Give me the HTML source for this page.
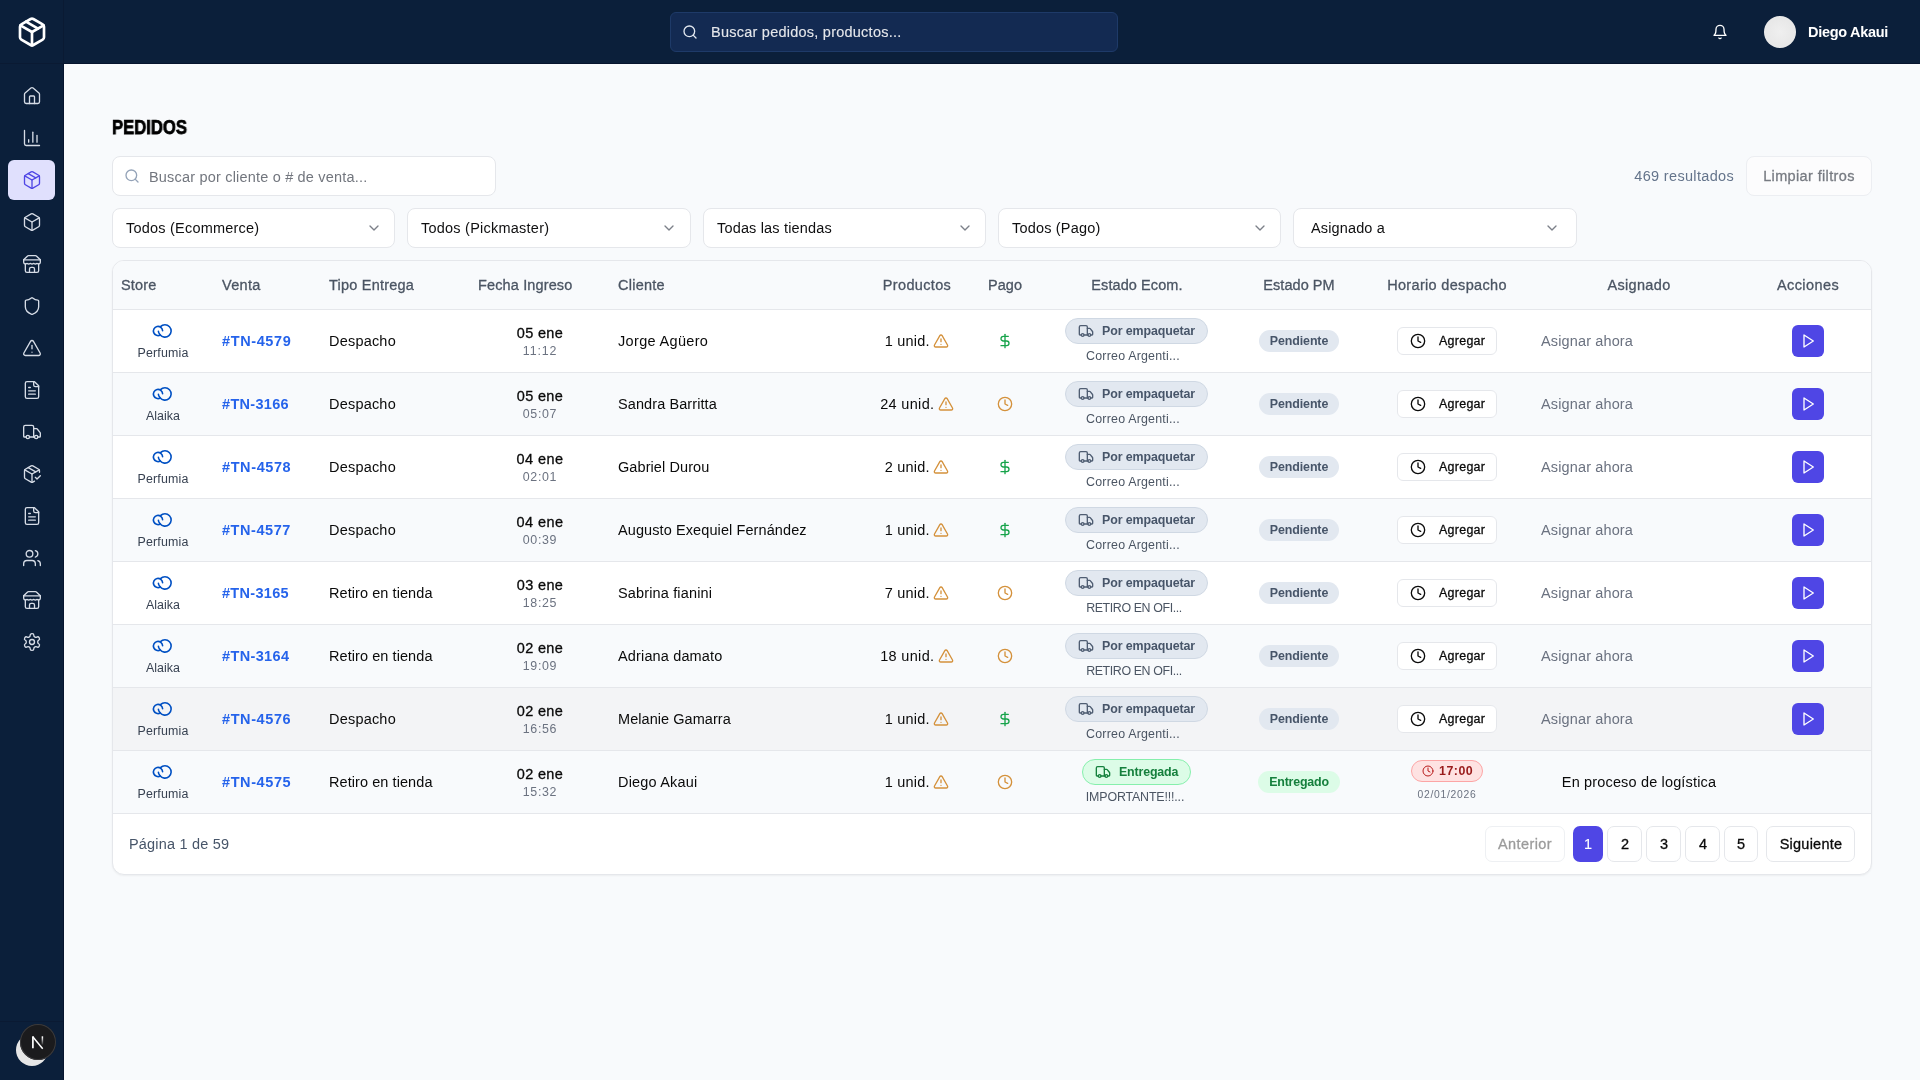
<!DOCTYPE html>
<html lang="es"><head><meta charset="utf-8"><title>Pedidos</title><style>
html,body{margin:0;padding:0}
body{width:1920px;height:1080px;position:relative;overflow:hidden;background:#f8fafc;font-family:"Liberation Sans", sans-serif;}
body div,body svg{position:absolute;box-sizing:border-box}
.tx{white-space:nowrap;line-height:1;will-change:transform}
.t{display:inline-block}
.fx{will-change:transform;display:flex;justify-content:center;align-items:center;white-space:nowrap}
.fx>*{position:static!important;flex:none}
</style></head><body>
<div style="left:0px;top:0px;width:1920px;height:64px;background:#0b1f3a;border-bottom:1px solid #06152e"></div>
<div style="left:0px;top:0px;width:64px;height:1080px;background:#0b1f3a;border-right:1px solid #06152e"></div>
<div style="left:0px;top:63px;width:63px;height:1px;background:#0a1a33"></div>
<div style="left:63px;top:0px;width:1px;height:63px;background:#0a1a33"></div>
<svg style="left:16.0px;top:16.0px;" width="32" height="32" viewBox="0 0 24 24" fill="none" stroke="#ffffff" stroke-width="2" stroke-linecap="round" stroke-linejoin="round"><path d="M11 21.73a2 2 0 0 0 2 0l7-4A2 2 0 0 0 21 16V8a2 2 0 0 0-1-1.73l-7-4a2 2 0 0 0-2 0l-7 4A2 2 0 0 0 3 8v8a2 2 0 0 0 1 1.73z"/><path d="M12 22V12"/><path d="M3.29 7 12 12l8.71-5"/><path d="m7.5 4.27 9 5.15"/></svg>
<svg style="left:22.0px;top:86.0px;" width="20" height="20" viewBox="0 0 24 24" fill="none" stroke="#d6dce6" stroke-width="1.6" stroke-linecap="round" stroke-linejoin="round"><path d="M15 21v-8a1 1 0 0 0-1-1h-4a1 1 0 0 0-1 1v8"/><path d="M3 10a2 2 0 0 1 .709-1.528l7-5.999a2 2 0 0 1 2.582 0l7 5.999A2 2 0 0 1 21 10v9a2 2 0 0 1-2 2H5a2 2 0 0 1-2-2z"/></svg>
<svg style="left:22.0px;top:128.0px;" width="20" height="20" viewBox="0 0 24 24" fill="none" stroke="#d6dce6" stroke-width="1.6" stroke-linecap="round" stroke-linejoin="round"><path d="M3 3v16a2 2 0 0 0 2 2h16"/><path d="M18 17V9"/><path d="M13 17V5"/><path d="M8 17v-3"/></svg>
<div style="left:8px;top:160px;width:47px;height:40px;background:#e0e0fd;border-radius:6px"></div>
<svg style="left:22.0px;top:170.0px;" width="20" height="20" viewBox="0 0 24 24" fill="none" stroke="#4f46e5" stroke-width="1.6" stroke-linecap="round" stroke-linejoin="round"><path d="M11 21.73a2 2 0 0 0 2 0l7-4A2 2 0 0 0 21 16V8a2 2 0 0 0-1-1.73l-7-4a2 2 0 0 0-2 0l-7 4A2 2 0 0 0 3 8v8a2 2 0 0 0 1 1.73z"/><path d="M12 22V12"/><path d="M3.29 7 12 12l8.71-5"/><path d="m7.5 4.27 9 5.15"/></svg>
<svg style="left:22.0px;top:212.0px;" width="20" height="20" viewBox="0 0 24 24" fill="none" stroke="#d6dce6" stroke-width="1.6" stroke-linecap="round" stroke-linejoin="round"><path d="M21 8a2 2 0 0 0-1-1.73l-7-4a2 2 0 0 0-2 0l-7 4A2 2 0 0 0 3 8v8a2 2 0 0 0 1 1.73l7 4a2 2 0 0 0 2 0l7-4A2 2 0 0 0 21 16Z"/><path d="m3.3 7 8.7 5 8.7-5"/><path d="M12 22V12"/></svg>
<svg style="left:22.0px;top:254.0px;" width="20" height="20" viewBox="0 0 24 24" fill="none" stroke="#d6dce6" stroke-width="1.6" stroke-linecap="round" stroke-linejoin="round"><path d="m2 7 4.41-4.41A2 2 0 0 1 7.83 2h8.34a2 2 0 0 1 1.42.59L22 7"/><path d="M4 12v8a2 2 0 0 0 2 2h12a2 2 0 0 0 2-2v-8"/><path d="M15 22v-4a2 2 0 0 0-2-2h-2a2 2 0 0 0-2 2v4"/><path d="M2 7h20"/><path d="M22 7v3a2 2 0 0 1-2 2a2.7 2.7 0 0 1-1.59-.63.7.7 0 0 0-.82 0A2.7 2.7 0 0 1 16 12a2.7 2.7 0 0 1-1.59-.63.7.7 0 0 0-.82 0A2.7 2.7 0 0 1 12 12a2.7 2.7 0 0 1-1.59-.63.7.7 0 0 0-.82 0A2.7 2.7 0 0 1 8 12a2.7 2.7 0 0 1-1.59-.63.7.7 0 0 0-.82 0A2.7 2.7 0 0 1 4 12a2 2 0 0 1-2-2V7"/></svg>
<svg style="left:22.0px;top:296.0px;" width="20" height="20" viewBox="0 0 24 24" fill="none" stroke="#d6dce6" stroke-width="1.6" stroke-linecap="round" stroke-linejoin="round"><path d="M20 13c0 5-3.5 7.5-7.66 8.95a1 1 0 0 1-.67-.01C7.5 20.5 4 18 4 13V6a1 1 0 0 1 1-1c2 0 4.5-1.2 6.24-2.72a1.17 1.17 0 0 1 1.52 0C14.51 3.81 17 5 19 5a1 1 0 0 1 1 1z"/></svg>
<svg style="left:22.0px;top:338.0px;" width="20" height="20" viewBox="0 0 24 24" fill="none" stroke="#d6dce6" stroke-width="1.6" stroke-linecap="round" stroke-linejoin="round"><path d="m21.73 18-8-14a2 2 0 0 0-3.48 0l-8 14A2 2 0 0 0 4 21h16a2 2 0 0 0 1.73-3"/><path d="M12 9v4"/><path d="M12 17h.01"/></svg>
<svg style="left:22.0px;top:380.0px;" width="20" height="20" viewBox="0 0 24 24" fill="none" stroke="#d6dce6" stroke-width="1.6" stroke-linecap="round" stroke-linejoin="round"><path d="M15 2H6a2 2 0 0 0-2 2v16a2 2 0 0 0 2 2h12a2 2 0 0 0 2-2V7Z"/><path d="M14 2v4a2 2 0 0 0 2 2h4"/><path d="M10 9H8"/><path d="M16 13H8"/><path d="M16 17H8"/></svg>
<svg style="left:22.0px;top:422.0px;" width="20" height="20" viewBox="0 0 24 24" fill="none" stroke="#d6dce6" stroke-width="1.6" stroke-linecap="round" stroke-linejoin="round"><path d="M14 18V6a2 2 0 0 0-2-2H4a2 2 0 0 0-2 2v11a1 1 0 0 0 1 1h2"/><path d="M15 18H9"/><path d="M19 18h2a1 1 0 0 0 1-1v-3.65a1 1 0 0 0-.22-.624l-3.48-4.35A1 1 0 0 0 17.52 8H14"/><circle cx="17" cy="18" r="2"/><circle cx="7" cy="18" r="2"/></svg>
<svg style="left:22.0px;top:464.0px;" width="20" height="20" viewBox="0 0 24 24" fill="none" stroke="#d6dce6" stroke-width="1.6" stroke-linecap="round" stroke-linejoin="round"><path d="m16 16 2 2 4-4"/><path d="M21 10V8a2 2 0 0 0-1-1.73l-7-4a2 2 0 0 0-2 0l-7 4A2 2 0 0 0 3 8v8a2 2 0 0 0 1 1.73l7 4a2 2 0 0 0 2 0l2-1.14"/><path d="m7.5 4.27 9 5.15"/><path d="M3.29 7 12 12l8.71-5"/><path d="M12 22V12"/></svg>
<svg style="left:22.0px;top:506.0px;" width="20" height="20" viewBox="0 0 24 24" fill="none" stroke="#d6dce6" stroke-width="1.6" stroke-linecap="round" stroke-linejoin="round"><path d="M15 2H6a2 2 0 0 0-2 2v16a2 2 0 0 0 2 2h12a2 2 0 0 0 2-2V7Z"/><path d="M14 2v4a2 2 0 0 0 2 2h4"/><path d="M10 9H8"/><path d="M16 13H8"/><path d="M16 17H8"/></svg>
<svg style="left:22.0px;top:548.0px;" width="20" height="20" viewBox="0 0 24 24" fill="none" stroke="#d6dce6" stroke-width="1.6" stroke-linecap="round" stroke-linejoin="round"><path d="M16 21v-2a4 4 0 0 0-4-4H6a4 4 0 0 0-4 4v2"/><circle cx="9" cy="7" r="4"/><path d="M22 21v-2a4 4 0 0 0-3-3.87"/><path d="M16 3.13a4 4 0 0 1 0 7.75"/></svg>
<svg style="left:22.0px;top:590.0px;" width="20" height="20" viewBox="0 0 24 24" fill="none" stroke="#d6dce6" stroke-width="1.6" stroke-linecap="round" stroke-linejoin="round"><path d="m2 7 4.41-4.41A2 2 0 0 1 7.83 2h8.34a2 2 0 0 1 1.42.59L22 7"/><path d="M4 12v8a2 2 0 0 0 2 2h12a2 2 0 0 0 2-2v-8"/><path d="M15 22v-4a2 2 0 0 0-2-2h-2a2 2 0 0 0-2 2v4"/><path d="M2 7h20"/><path d="M22 7v3a2 2 0 0 1-2 2a2.7 2.7 0 0 1-1.59-.63.7.7 0 0 0-.82 0A2.7 2.7 0 0 1 16 12a2.7 2.7 0 0 1-1.59-.63.7.7 0 0 0-.82 0A2.7 2.7 0 0 1 12 12a2.7 2.7 0 0 1-1.59-.63.7.7 0 0 0-.82 0A2.7 2.7 0 0 1 8 12a2.7 2.7 0 0 1-1.59-.63.7.7 0 0 0-.82 0A2.7 2.7 0 0 1 4 12a2 2 0 0 1-2-2V7"/></svg>
<svg style="left:22.0px;top:632.0px;" width="20" height="20" viewBox="0 0 24 24" fill="none" stroke="#d6dce6" stroke-width="1.6" stroke-linecap="round" stroke-linejoin="round"><path d="M12.22 2h-.44a2 2 0 0 0-2 2v.18a2 2 0 0 1-1 1.73l-.43.25a2 2 0 0 1-2 0l-.15-.08a2 2 0 0 0-2.73.73l-.22.38a2 2 0 0 0 .73 2.73l.15.1a2 2 0 0 1 1 1.72v.51a2 2 0 0 1-1 1.74l-.15.09a2 2 0 0 0-.73 2.73l.22.38a2 2 0 0 0 2.73.73l.15-.08a2 2 0 0 1 2 0l.43.25a2 2 0 0 1 1 1.73V20a2 2 0 0 0 2 2h.44a2 2 0 0 0 2-2v-.18a2 2 0 0 1 1-1.73l.43-.25a2 2 0 0 1 2 0l.15.08a2 2 0 0 0 2.73-.73l.22-.39a2 2 0 0 0-.73-2.73l-.15-.08a2 2 0 0 1-1-1.74v-.5a2 2 0 0 1 1-1.74l.15-.09a2 2 0 0 0 .73-2.73l-.22-.38a2 2 0 0 0-2.73-.73l-.15.08a2 2 0 0 1-2 0l-.43-.25a2 2 0 0 1-1-1.73V4a2 2 0 0 0-2-2z"/><circle cx="12" cy="12" r="3"/></svg>
<div style="left:0px;top:1021px;width:63px;height:1px;background:#0a1a33"></div>
<div style="left:16px;top:1034px;width:32px;height:32px;background:#e6e6e6;border-radius:50%"></div>
<div style="left:20px;top:1024px;width:36px;height:36px;background:#1b1b1d;border-radius:50%;box-shadow:inset 0 0 0 1px #3b3b3d"></div>
<svg style="left:31px;top:1035px" width="14" height="16" viewBox="0 0 14 16" fill="none" stroke="#fff" stroke-width="1.7"><defs><linearGradient id="ng" gradientUnits="userSpaceOnUse" x1="0" y1="2" x2="0" y2="10.5"><stop offset="0" stop-color="#fff"/><stop offset="1" stop-color="#fff" stop-opacity="0"/></linearGradient></defs><path d="M1.9 13.2V1.5"/><path d="M1.6 1.6L11.7 13.7" stroke-width="1.5"/><path d="M11.4 1.3v8.4" stroke="url(#ng)" stroke-width="1.5"/></svg>
<div style="left:670px;top:12px;width:448px;height:40px;background:#132a52;border:1px solid #1e3a68;border-radius:6px"></div>
<svg style="left:682.0px;top:24.0px;" width="16" height="16" viewBox="0 0 24 24" fill="none" stroke="#e2e8f0" stroke-width="2" stroke-linecap="round" stroke-linejoin="round"><circle cx="11" cy="11" r="8"/><path d="m21 21-4.3-4.3"/></svg>
<div class="tx" style="left:711px;top:24.63px;font-size:14.49px;font-weight:400;color:#e5e7eb;-webkit-text-stroke:0.12px #e5e7eb;letter-spacing:0.247px;"><span class="t">Buscar pedidos, productos...</span></div>
<svg style="left:1712.0px;top:24.0px;" width="16" height="16" viewBox="0 0 24 24" fill="none" stroke="#ffffff" stroke-width="2" stroke-linecap="round" stroke-linejoin="round"><path d="M6 8a6 6 0 0 1 12 0c0 7 3 9 3 9H3s3-2 3-9"/><path d="M10.3 21a1.94 1.94 0 0 0 3.4 0"/></svg>
<div style="left:1764px;top:16px;width:32px;height:32px;background:radial-gradient(circle,#efefef 0,#e8e8e8 60%);border-radius:50%"></div>
<div class="tx" style="left:1808px;top:24.63px;font-size:14.49px;font-weight:700;color:#ffffff;letter-spacing:-0.281px;"><span class="t">Diego Akaui</span></div>
<div class="tx" style="left:111.6px;top:117.74px;font-size:19.5px;font-weight:700;color:#000;-webkit-text-stroke:0.75px #000;transform:scaleX(.855);transform-origin:0 0">PEDIDOS</div>
<div style="left:112px;top:156px;width:384px;height:40px;background:#fff;border:1px solid #e5e7eb;border-radius:8px"></div>
<svg style="left:124.0px;top:168.2px;" width="16" height="16" viewBox="0 0 24 24" fill="none" stroke="#94a3b8" stroke-width="2" stroke-linecap="round" stroke-linejoin="round"><circle cx="11" cy="11" r="8"/><path d="m21 21-4.3-4.3"/></svg>
<div class="tx" style="left:149px;top:169.73px;font-size:14.49px;font-weight:400;color:#72767e;letter-spacing:0.196px;"><span class="t">Buscar por cliente o # de venta...</span></div>
<div class="tx" style="left:1134px;width:600px;text-align:right;top:169.23px;font-size:14.49px;font-weight:400;color:#64748b;letter-spacing:0.333px;"><span class="t">469 resultados</span></div>
<div style="left:1746px;top:156px;width:126px;height:40px;background:#fcfcfd;border:1px solid #eceef2;border-radius:8px"></div>
<div class="tx" style="left:1509px;width:600px;text-align:center;top:169.23px;font-size:14.49px;font-weight:400;color:#777b82;-webkit-text-stroke:0.3px #777b82;letter-spacing:0.371px;"><span class="t">Limpiar filtros</span></div>
<div style="left:112px;top:208px;width:283px;height:40px;background:#fff;border:1px solid #e5e7eb;border-radius:8px"></div>
<div class="tx" style="left:126px;top:220.73px;font-size:14.49px;font-weight:400;color:#0f0f10;letter-spacing:0.223px;"><span class="t">Todos (Ecommerce)</span></div>
<svg style="left:366.0px;top:220.0px;" width="16" height="16" viewBox="0 0 24 24" fill="none" stroke="#7c8089" stroke-width="2" stroke-linecap="round" stroke-linejoin="round"><path d="m6 9 6 6 6-6"/></svg>
<div style="left:407px;top:208px;width:284px;height:40px;background:#fff;border:1px solid #e5e7eb;border-radius:8px"></div>
<div class="tx" style="left:421px;top:220.73px;font-size:14.49px;font-weight:400;color:#0f0f10;letter-spacing:0.239px;"><span class="t">Todos (Pickmaster)</span></div>
<svg style="left:661.0px;top:220.0px;" width="16" height="16" viewBox="0 0 24 24" fill="none" stroke="#7c8089" stroke-width="2" stroke-linecap="round" stroke-linejoin="round"><path d="m6 9 6 6 6-6"/></svg>
<div style="left:703px;top:208px;width:283px;height:40px;background:#fff;border:1px solid #e5e7eb;border-radius:8px"></div>
<div class="tx" style="left:717px;top:220.73px;font-size:14.49px;font-weight:400;color:#0f0f10;letter-spacing:0.176px;"><span class="t">Todas las tiendas</span></div>
<svg style="left:957.0px;top:220.0px;" width="16" height="16" viewBox="0 0 24 24" fill="none" stroke="#7c8089" stroke-width="2" stroke-linecap="round" stroke-linejoin="round"><path d="m6 9 6 6 6-6"/></svg>
<div style="left:998px;top:208px;width:283px;height:40px;background:#fff;border:1px solid #e5e7eb;border-radius:8px"></div>
<div class="tx" style="left:1012px;top:220.73px;font-size:14.49px;font-weight:400;color:#0f0f10;letter-spacing:0.194px;"><span class="t">Todos (Pago)</span></div>
<svg style="left:1252.0px;top:220.0px;" width="16" height="16" viewBox="0 0 24 24" fill="none" stroke="#7c8089" stroke-width="2" stroke-linecap="round" stroke-linejoin="round"><path d="m6 9 6 6 6-6"/></svg>
<div style="left:1293px;top:208px;width:284px;height:40px;background:#fff;border:1px solid #e5e7eb;border-radius:8px"></div>
<div class="tx" style="left:1310.5px;top:220.73px;font-size:14.49px;font-weight:400;color:#0f0f10;letter-spacing:0.145px;"><span class="t">Asignado a</span></div>
<svg style="left:1544.0px;top:220.0px;" width="16" height="16" viewBox="0 0 24 24" fill="none" stroke="#7c8089" stroke-width="2" stroke-linecap="round" stroke-linejoin="round"><path d="m6 9 6 6 6-6"/></svg>
<div style="left:112px;top:260px;width:1760px;height:615px;background:#fff;border:1px solid #e5e7eb;border-radius:12px;overflow:hidden;box-shadow:0 1px 2px rgba(0,0,0,.05)">
<div style="left:-113px;top:-261px;width:1920px;height:1080px">
<div style="left:113px;top:261px;width:1758px;height:48px;background:#f8fafc"></div>
<div style="left:113px;top:309px;width:1758px;height:1px;background:#e5e7eb"></div>
<div style="left:113px;top:310px;width:1758px;height:62px;background:#ffffff"></div>
<div style="left:113px;top:372px;width:1758px;height:1px;background:#e5e7eb"></div>
<div style="left:113px;top:373px;width:1758px;height:62px;background:#f8fafc"></div>
<div style="left:113px;top:435px;width:1758px;height:1px;background:#e5e7eb"></div>
<div style="left:113px;top:436px;width:1758px;height:62px;background:#ffffff"></div>
<div style="left:113px;top:498px;width:1758px;height:1px;background:#e5e7eb"></div>
<div style="left:113px;top:499px;width:1758px;height:62px;background:#f8fafc"></div>
<div style="left:113px;top:561px;width:1758px;height:1px;background:#e5e7eb"></div>
<div style="left:113px;top:562px;width:1758px;height:62px;background:#ffffff"></div>
<div style="left:113px;top:624px;width:1758px;height:1px;background:#e5e7eb"></div>
<div style="left:113px;top:625px;width:1758px;height:62px;background:#f8fafc"></div>
<div style="left:113px;top:687px;width:1758px;height:1px;background:#e5e7eb"></div>
<div style="left:113px;top:688px;width:1758px;height:62px;background:#f3f4f6"></div>
<div style="left:113px;top:750px;width:1758px;height:1px;background:#e5e7eb"></div>
<div style="left:113px;top:751px;width:1758px;height:62px;background:#f8fafc"></div>
<div style="left:113px;top:813px;width:1758px;height:1px;background:#e5e7eb"></div>
<div class="tx" style="left:121px;top:277.93px;font-size:14.49px;font-weight:400;color:#4b5563;-webkit-text-stroke:0.3px #4b5563;letter-spacing:0.175px;"><span class="t">Store</span></div>
<div class="tx" style="left:222px;top:277.93px;font-size:14.49px;font-weight:400;color:#4b5563;-webkit-text-stroke:0.3px #4b5563;letter-spacing:0.309px;"><span class="t">Venta</span></div>
<div class="tx" style="left:329px;top:277.93px;font-size:14.49px;font-weight:400;color:#4b5563;-webkit-text-stroke:0.3px #4b5563;letter-spacing:0.228px;"><span class="t">Tipo Entrega</span></div>
<div class="tx" style="left:477.6px;top:277.93px;font-size:14.49px;font-weight:400;color:#4b5563;-webkit-text-stroke:0.3px #4b5563;letter-spacing:0.142px;"><span class="t">Fecha Ingreso</span></div>
<div class="tx" style="left:617.7px;top:277.93px;font-size:14.49px;font-weight:400;color:#4b5563;-webkit-text-stroke:0.3px #4b5563;letter-spacing:0.248px;"><span class="t">Cliente</span></div>
<div class="tx" style="left:617px;width:600px;text-align:center;top:277.93px;font-size:14.49px;font-weight:400;color:#4b5563;-webkit-text-stroke:0.3px #4b5563;letter-spacing:0.351px;"><span class="t">Productos</span></div>
<div class="tx" style="left:705px;width:600px;text-align:center;top:277.93px;font-size:14.49px;font-weight:400;color:#4b5563;-webkit-text-stroke:0.3px #4b5563;letter-spacing:0.047px;"><span class="t">Pago</span></div>
<div class="tx" style="left:836.5px;width:600px;text-align:center;top:277.93px;font-size:14.49px;font-weight:400;color:#4b5563;-webkit-text-stroke:0.3px #4b5563;letter-spacing:0.092px;"><span class="t">Estado Ecom.</span></div>
<div class="tx" style="left:999.2px;width:600px;text-align:center;top:277.93px;font-size:14.49px;font-weight:400;color:#4b5563;-webkit-text-stroke:0.3px #4b5563;letter-spacing:0.057px;"><span class="t">Estado PM</span></div>
<div class="tx" style="left:1147px;width:600px;text-align:center;top:277.93px;font-size:14.49px;font-weight:400;color:#4b5563;-webkit-text-stroke:0.3px #4b5563;letter-spacing:0.329px;"><span class="t">Horario despacho</span></div>
<div class="tx" style="left:1338.6px;width:600px;text-align:center;top:277.93px;font-size:14.49px;font-weight:400;color:#4b5563;-webkit-text-stroke:0.3px #4b5563;letter-spacing:0.338px;"><span class="t">Asignado</span></div>
<div class="tx" style="left:1508.2px;width:600px;text-align:center;top:277.93px;font-size:14.49px;font-weight:400;color:#4b5563;-webkit-text-stroke:0.3px #4b5563;letter-spacing:0.422px;"><span class="t">Acciones</span></div>
<svg style="left:151.4px;top:322.8px" width="22" height="16" viewBox="0 0 22 16" fill="none" stroke="#0050c3" stroke-width="1.6" stroke-linecap="round"><path d="M9.3 12A4.6 4.6 0 1 1 11.6 7.76"/><path d="M7.4 8.25Q7.5 10.3 9.03 11.7A6.2 6.2 0 1 0 9.5 3.6"/></svg>
<div class="tx" style="left:-137px;width:600px;text-align:center;top:346.69px;font-size:12.42px;font-weight:400;color:#374151;letter-spacing:0.168px;"><span class="t">Perfumia</span></div>
<div class="tx" style="left:222px;top:334.03px;font-size:14.49px;font-weight:700;color:#2563eb;letter-spacing:0.618px;"><span class="t">#TN-4579</span></div>
<div class="tx" style="left:329px;top:334.03px;font-size:14.49px;font-weight:400;color:#0a0a0a;letter-spacing:0.209px;"><span class="t">Despacho</span></div>
<div class="tx" style="left:239.79999999999995px;width:600px;text-align:center;top:325.53px;font-size:14.49px;font-weight:400;color:#0a0a0a;-webkit-text-stroke:0.3px #0a0a0a;letter-spacing:0.331px;"><span class="t">05 ene</span></div>
<div class="tx" style="left:239.79999999999995px;width:600px;text-align:center;top:345.19px;font-size:12.42px;font-weight:400;color:#6b7280;letter-spacing:0.847px;font-variant-numeric:tabular-nums;"><span class="t">11:12</span></div>
<div class="tx" style="left:617.7px;top:334.03px;font-size:14.49px;font-weight:400;color:#0a0a0a;letter-spacing:0.339px;"><span class="t">Jorge Agüero</span></div>
<div class="fx" style="left:716.6px;top:331px;width:400px;height:20px"><span class="t" style="font-size:14.49px;line-height:20px;color:#0a0a0a;font-variant-numeric:tabular-nums;letter-spacing:0.232px;">1 unid.</span><svg width="16" height="16" viewBox="0 0 24 24" fill="none" stroke="#d4913b" stroke-width="2" stroke-linecap="round" stroke-linejoin="round" style="margin-left:3.4px"><path d="m21.73 18-8-14a2 2 0 0 0-3.48 0l-8 14A2 2 0 0 0 4 21h16a2 2 0 0 0 1.73-3"/><path d="M12 9v4"/><path d="M12 17h.01"/></svg></div>
<svg style="left:997.0px;top:333.3px;" width="16" height="16" viewBox="0 0 24 24" fill="none" stroke="#16a34a" stroke-width="2" stroke-linecap="round" stroke-linejoin="round"><path d="M12 2v20"/><path d="M17 5H9.5a3.5 3.5 0 0 0 0 7h5a3.5 3.5 0 0 1 0 7H6"/></svg>
<div style="left:1065px;top:318px;width:143px;height:26px;background:#e2e8f0;border:1px solid #cfd8e3;border-radius:13px"></div>
<svg style="left:1078.0px;top:323.0px;" width="16" height="16" viewBox="0 0 24 24" fill="none" stroke="#4f5d72" stroke-width="2" stroke-linecap="round" stroke-linejoin="round"><path d="M14 18V6a2 2 0 0 0-2-2H4a2 2 0 0 0-2 2v11a1 1 0 0 0 1 1h2"/><path d="M15 18H9"/><path d="M19 18h2a1 1 0 0 0 1-1v-3.65a1 1 0 0 0-.22-.624l-3.48-4.35A1 1 0 0 0 17.52 8H14"/><circle cx="17" cy="18" r="2"/><circle cx="7" cy="18" r="2"/></svg>
<div class="tx" style="left:1102px;top:324.79px;font-size:12.42px;font-weight:700;color:#475569;letter-spacing:-0.102px;"><span class="t">Por empaquetar</span></div>
<div class="tx" style="left:833px;width:600px;text-align:center;top:349.79px;font-size:12.42px;font-weight:400;color:#4b5563;letter-spacing:0.203px;"><span class="t">Correo Argenti...</span></div>
<div style="left:1259px;top:330px;width:80px;height:22px;background:#e2e8f0;border-radius:11px"></div>
<div class="tx" style="left:999.2px;width:600px;text-align:center;top:335.29px;font-size:12.42px;font-weight:700;color:#475569;letter-spacing:-0.102px;"><span class="t">Pendiente</span></div>
<div style="left:1397px;top:327px;width:100px;height:28px;background:#fff;border:1px solid #e5e7eb;border-radius:6px"></div>
<svg style="left:1410.0px;top:333.0px;" width="16" height="16" viewBox="0 0 24 24" fill="none" stroke="#0a0a0a" stroke-width="2" stroke-linecap="round" stroke-linejoin="round"><circle cx="12" cy="12" r="10"/><path d="M12 6v6l4 2"/></svg>
<div class="tx" style="left:1438.5px;top:335.29px;font-size:12.42px;font-weight:400;color:#0a0a0a;-webkit-text-stroke:0.3px #0a0a0a;letter-spacing:0.295px;"><span class="t">Agregar</span></div>
<div class="tx" style="left:1540.5px;top:334.03px;font-size:14.49px;font-weight:400;color:#6b7280;letter-spacing:0.143px;"><span class="t">Asignar ahora</span></div>
<div style="left:1792px;top:325px;width:32px;height:32px;background:#4f46e5;border-radius:6px"></div>
<svg style="left:1800.0px;top:333.0px;" width="16" height="16" viewBox="0 0 24 24" fill="none" stroke="#ffffff" stroke-width="2" stroke-linecap="round" stroke-linejoin="round"><path d="M6 3l14 9-14 9z"/></svg>
<svg style="left:151.4px;top:385.8px" width="22" height="16" viewBox="0 0 22 16" fill="none" stroke="#0050c3" stroke-width="1.6" stroke-linecap="round"><path d="M9.3 12A4.6 4.6 0 1 1 11.6 7.76"/><path d="M7.4 8.25Q7.5 10.3 9.03 11.7A6.2 6.2 0 1 0 9.5 3.6"/></svg>
<div class="tx" style="left:-137px;width:600px;text-align:center;top:409.69px;font-size:12.42px;font-weight:400;color:#374151;letter-spacing:0.06px;"><span class="t">Alaika</span></div>
<div class="tx" style="left:222px;top:397.03px;font-size:14.49px;font-weight:700;color:#2563eb;letter-spacing:0.324px;"><span class="t">#TN-3166</span></div>
<div class="tx" style="left:329px;top:397.03px;font-size:14.49px;font-weight:400;color:#0a0a0a;letter-spacing:0.209px;"><span class="t">Despacho</span></div>
<div class="tx" style="left:239.79999999999995px;width:600px;text-align:center;top:388.53px;font-size:14.49px;font-weight:400;color:#0a0a0a;-webkit-text-stroke:0.3px #0a0a0a;letter-spacing:0.331px;"><span class="t">05 ene</span></div>
<div class="tx" style="left:239.79999999999995px;width:600px;text-align:center;top:408.19px;font-size:12.42px;font-weight:400;color:#6b7280;letter-spacing:0.662px;font-variant-numeric:tabular-nums;"><span class="t">05:07</span></div>
<div class="tx" style="left:617.7px;top:397.03px;font-size:14.49px;font-weight:400;color:#0a0a0a;letter-spacing:0.099px;"><span class="t">Sandra Barritta</span></div>
<div class="fx" style="left:716.6px;top:394px;width:400px;height:20px"><span class="t" style="font-size:14.49px;line-height:20px;color:#0a0a0a;font-variant-numeric:tabular-nums;letter-spacing:0.332px;">24 unid.</span><svg width="16" height="16" viewBox="0 0 24 24" fill="none" stroke="#d4913b" stroke-width="2" stroke-linecap="round" stroke-linejoin="round" style="margin-left:3.4px"><path d="m21.73 18-8-14a2 2 0 0 0-3.48 0l-8 14A2 2 0 0 0 4 21h16a2 2 0 0 0 1.73-3"/><path d="M12 9v4"/><path d="M12 17h.01"/></svg></div>
<svg style="left:997.0px;top:396.3px;" width="16" height="16" viewBox="0 0 24 24" fill="none" stroke="#d4913b" stroke-width="2" stroke-linecap="round" stroke-linejoin="round"><circle cx="12" cy="12" r="10"/><path d="M12 6v6l4 2"/></svg>
<div style="left:1065px;top:381px;width:143px;height:26px;background:#e2e8f0;border:1px solid #cfd8e3;border-radius:13px"></div>
<svg style="left:1078.0px;top:386.0px;" width="16" height="16" viewBox="0 0 24 24" fill="none" stroke="#4f5d72" stroke-width="2" stroke-linecap="round" stroke-linejoin="round"><path d="M14 18V6a2 2 0 0 0-2-2H4a2 2 0 0 0-2 2v11a1 1 0 0 0 1 1h2"/><path d="M15 18H9"/><path d="M19 18h2a1 1 0 0 0 1-1v-3.65a1 1 0 0 0-.22-.624l-3.48-4.35A1 1 0 0 0 17.52 8H14"/><circle cx="17" cy="18" r="2"/><circle cx="7" cy="18" r="2"/></svg>
<div class="tx" style="left:1102px;top:387.79px;font-size:12.42px;font-weight:700;color:#475569;letter-spacing:-0.102px;"><span class="t">Por empaquetar</span></div>
<div class="tx" style="left:833px;width:600px;text-align:center;top:412.79px;font-size:12.42px;font-weight:400;color:#4b5563;letter-spacing:0.203px;"><span class="t">Correo Argenti...</span></div>
<div style="left:1259px;top:393px;width:80px;height:22px;background:#e2e8f0;border-radius:11px"></div>
<div class="tx" style="left:999.2px;width:600px;text-align:center;top:398.29px;font-size:12.42px;font-weight:700;color:#475569;letter-spacing:-0.102px;"><span class="t">Pendiente</span></div>
<div style="left:1397px;top:390px;width:100px;height:28px;background:#fff;border:1px solid #e5e7eb;border-radius:6px"></div>
<svg style="left:1410.0px;top:396.0px;" width="16" height="16" viewBox="0 0 24 24" fill="none" stroke="#0a0a0a" stroke-width="2" stroke-linecap="round" stroke-linejoin="round"><circle cx="12" cy="12" r="10"/><path d="M12 6v6l4 2"/></svg>
<div class="tx" style="left:1438.5px;top:398.29px;font-size:12.42px;font-weight:400;color:#0a0a0a;-webkit-text-stroke:0.3px #0a0a0a;letter-spacing:0.295px;"><span class="t">Agregar</span></div>
<div class="tx" style="left:1540.5px;top:397.03px;font-size:14.49px;font-weight:400;color:#6b7280;letter-spacing:0.143px;"><span class="t">Asignar ahora</span></div>
<div style="left:1792px;top:388px;width:32px;height:32px;background:#4f46e5;border-radius:6px"></div>
<svg style="left:1800.0px;top:396.0px;" width="16" height="16" viewBox="0 0 24 24" fill="none" stroke="#ffffff" stroke-width="2" stroke-linecap="round" stroke-linejoin="round"><path d="M6 3l14 9-14 9z"/></svg>
<svg style="left:151.4px;top:448.8px" width="22" height="16" viewBox="0 0 22 16" fill="none" stroke="#0050c3" stroke-width="1.6" stroke-linecap="round"><path d="M9.3 12A4.6 4.6 0 1 1 11.6 7.76"/><path d="M7.4 8.25Q7.5 10.3 9.03 11.7A6.2 6.2 0 1 0 9.5 3.6"/></svg>
<div class="tx" style="left:-137px;width:600px;text-align:center;top:472.69px;font-size:12.42px;font-weight:400;color:#374151;letter-spacing:0.168px;"><span class="t">Perfumia</span></div>
<div class="tx" style="left:222px;top:460.03px;font-size:14.49px;font-weight:700;color:#2563eb;letter-spacing:0.61px;"><span class="t">#TN-4578</span></div>
<div class="tx" style="left:329px;top:460.03px;font-size:14.49px;font-weight:400;color:#0a0a0a;letter-spacing:0.209px;"><span class="t">Despacho</span></div>
<div class="tx" style="left:239.79999999999995px;width:600px;text-align:center;top:451.53px;font-size:14.49px;font-weight:400;color:#0a0a0a;-webkit-text-stroke:0.3px #0a0a0a;letter-spacing:0.419px;"><span class="t">04 ene</span></div>
<div class="tx" style="left:239.79999999999995px;width:600px;text-align:center;top:471.19px;font-size:12.42px;font-weight:400;color:#6b7280;letter-spacing:0.662px;font-variant-numeric:tabular-nums;"><span class="t">02:01</span></div>
<div class="tx" style="left:617.7px;top:460.03px;font-size:14.49px;font-weight:400;color:#0a0a0a;letter-spacing:0.09px;"><span class="t">Gabriel Durou</span></div>
<div class="fx" style="left:716.6px;top:457px;width:400px;height:20px"><span class="t" style="font-size:14.49px;line-height:20px;color:#0a0a0a;font-variant-numeric:tabular-nums;letter-spacing:0.232px;">2 unid.</span><svg width="16" height="16" viewBox="0 0 24 24" fill="none" stroke="#d4913b" stroke-width="2" stroke-linecap="round" stroke-linejoin="round" style="margin-left:3.4px"><path d="m21.73 18-8-14a2 2 0 0 0-3.48 0l-8 14A2 2 0 0 0 4 21h16a2 2 0 0 0 1.73-3"/><path d="M12 9v4"/><path d="M12 17h.01"/></svg></div>
<svg style="left:997.0px;top:459.3px;" width="16" height="16" viewBox="0 0 24 24" fill="none" stroke="#16a34a" stroke-width="2" stroke-linecap="round" stroke-linejoin="round"><path d="M12 2v20"/><path d="M17 5H9.5a3.5 3.5 0 0 0 0 7h5a3.5 3.5 0 0 1 0 7H6"/></svg>
<div style="left:1065px;top:444px;width:143px;height:26px;background:#e2e8f0;border:1px solid #cfd8e3;border-radius:13px"></div>
<svg style="left:1078.0px;top:449.0px;" width="16" height="16" viewBox="0 0 24 24" fill="none" stroke="#4f5d72" stroke-width="2" stroke-linecap="round" stroke-linejoin="round"><path d="M14 18V6a2 2 0 0 0-2-2H4a2 2 0 0 0-2 2v11a1 1 0 0 0 1 1h2"/><path d="M15 18H9"/><path d="M19 18h2a1 1 0 0 0 1-1v-3.65a1 1 0 0 0-.22-.624l-3.48-4.35A1 1 0 0 0 17.52 8H14"/><circle cx="17" cy="18" r="2"/><circle cx="7" cy="18" r="2"/></svg>
<div class="tx" style="left:1102px;top:450.79px;font-size:12.42px;font-weight:700;color:#475569;letter-spacing:-0.102px;"><span class="t">Por empaquetar</span></div>
<div class="tx" style="left:833px;width:600px;text-align:center;top:475.79px;font-size:12.42px;font-weight:400;color:#4b5563;letter-spacing:0.203px;"><span class="t">Correo Argenti...</span></div>
<div style="left:1259px;top:456px;width:80px;height:22px;background:#e2e8f0;border-radius:11px"></div>
<div class="tx" style="left:999.2px;width:600px;text-align:center;top:461.29px;font-size:12.42px;font-weight:700;color:#475569;letter-spacing:-0.102px;"><span class="t">Pendiente</span></div>
<div style="left:1397px;top:453px;width:100px;height:28px;background:#fff;border:1px solid #e5e7eb;border-radius:6px"></div>
<svg style="left:1410.0px;top:459.0px;" width="16" height="16" viewBox="0 0 24 24" fill="none" stroke="#0a0a0a" stroke-width="2" stroke-linecap="round" stroke-linejoin="round"><circle cx="12" cy="12" r="10"/><path d="M12 6v6l4 2"/></svg>
<div class="tx" style="left:1438.5px;top:461.29px;font-size:12.42px;font-weight:400;color:#0a0a0a;-webkit-text-stroke:0.3px #0a0a0a;letter-spacing:0.295px;"><span class="t">Agregar</span></div>
<div class="tx" style="left:1540.5px;top:460.03px;font-size:14.49px;font-weight:400;color:#6b7280;letter-spacing:0.143px;"><span class="t">Asignar ahora</span></div>
<div style="left:1792px;top:451px;width:32px;height:32px;background:#4f46e5;border-radius:6px"></div>
<svg style="left:1800.0px;top:459.0px;" width="16" height="16" viewBox="0 0 24 24" fill="none" stroke="#ffffff" stroke-width="2" stroke-linecap="round" stroke-linejoin="round"><path d="M6 3l14 9-14 9z"/></svg>
<svg style="left:151.4px;top:511.8px" width="22" height="16" viewBox="0 0 22 16" fill="none" stroke="#0050c3" stroke-width="1.6" stroke-linecap="round"><path d="M9.3 12A4.6 4.6 0 1 1 11.6 7.76"/><path d="M7.4 8.25Q7.5 10.3 9.03 11.7A6.2 6.2 0 1 0 9.5 3.6"/></svg>
<div class="tx" style="left:-137px;width:600px;text-align:center;top:535.69px;font-size:12.42px;font-weight:400;color:#374151;letter-spacing:0.168px;"><span class="t">Perfumia</span></div>
<div class="tx" style="left:222px;top:523.03px;font-size:14.49px;font-weight:700;color:#2563eb;letter-spacing:0.558px;"><span class="t">#TN-4577</span></div>
<div class="tx" style="left:329px;top:523.03px;font-size:14.49px;font-weight:400;color:#0a0a0a;letter-spacing:0.209px;"><span class="t">Despacho</span></div>
<div class="tx" style="left:239.79999999999995px;width:600px;text-align:center;top:514.53px;font-size:14.49px;font-weight:400;color:#0a0a0a;-webkit-text-stroke:0.3px #0a0a0a;letter-spacing:0.419px;"><span class="t">04 ene</span></div>
<div class="tx" style="left:239.79999999999995px;width:600px;text-align:center;top:534.19px;font-size:12.42px;font-weight:400;color:#6b7280;letter-spacing:0.662px;font-variant-numeric:tabular-nums;"><span class="t">00:39</span></div>
<div class="tx" style="left:617.7px;top:523.03px;font-size:14.49px;font-weight:400;color:#0a0a0a;letter-spacing:0.101px;"><span class="t">Augusto Exequiel Fernández</span></div>
<div class="fx" style="left:716.6px;top:520px;width:400px;height:20px"><span class="t" style="font-size:14.49px;line-height:20px;color:#0a0a0a;font-variant-numeric:tabular-nums;letter-spacing:0.232px;">1 unid.</span><svg width="16" height="16" viewBox="0 0 24 24" fill="none" stroke="#d4913b" stroke-width="2" stroke-linecap="round" stroke-linejoin="round" style="margin-left:3.4px"><path d="m21.73 18-8-14a2 2 0 0 0-3.48 0l-8 14A2 2 0 0 0 4 21h16a2 2 0 0 0 1.73-3"/><path d="M12 9v4"/><path d="M12 17h.01"/></svg></div>
<svg style="left:997.0px;top:522.3px;" width="16" height="16" viewBox="0 0 24 24" fill="none" stroke="#16a34a" stroke-width="2" stroke-linecap="round" stroke-linejoin="round"><path d="M12 2v20"/><path d="M17 5H9.5a3.5 3.5 0 0 0 0 7h5a3.5 3.5 0 0 1 0 7H6"/></svg>
<div style="left:1065px;top:507px;width:143px;height:26px;background:#e2e8f0;border:1px solid #cfd8e3;border-radius:13px"></div>
<svg style="left:1078.0px;top:512.0px;" width="16" height="16" viewBox="0 0 24 24" fill="none" stroke="#4f5d72" stroke-width="2" stroke-linecap="round" stroke-linejoin="round"><path d="M14 18V6a2 2 0 0 0-2-2H4a2 2 0 0 0-2 2v11a1 1 0 0 0 1 1h2"/><path d="M15 18H9"/><path d="M19 18h2a1 1 0 0 0 1-1v-3.65a1 1 0 0 0-.22-.624l-3.48-4.35A1 1 0 0 0 17.52 8H14"/><circle cx="17" cy="18" r="2"/><circle cx="7" cy="18" r="2"/></svg>
<div class="tx" style="left:1102px;top:513.79px;font-size:12.42px;font-weight:700;color:#475569;letter-spacing:-0.102px;"><span class="t">Por empaquetar</span></div>
<div class="tx" style="left:833px;width:600px;text-align:center;top:538.79px;font-size:12.42px;font-weight:400;color:#4b5563;letter-spacing:0.203px;"><span class="t">Correo Argenti...</span></div>
<div style="left:1259px;top:519px;width:80px;height:22px;background:#e2e8f0;border-radius:11px"></div>
<div class="tx" style="left:999.2px;width:600px;text-align:center;top:524.29px;font-size:12.42px;font-weight:700;color:#475569;letter-spacing:-0.102px;"><span class="t">Pendiente</span></div>
<div style="left:1397px;top:516px;width:100px;height:28px;background:#fff;border:1px solid #e5e7eb;border-radius:6px"></div>
<svg style="left:1410.0px;top:522.0px;" width="16" height="16" viewBox="0 0 24 24" fill="none" stroke="#0a0a0a" stroke-width="2" stroke-linecap="round" stroke-linejoin="round"><circle cx="12" cy="12" r="10"/><path d="M12 6v6l4 2"/></svg>
<div class="tx" style="left:1438.5px;top:524.29px;font-size:12.42px;font-weight:400;color:#0a0a0a;-webkit-text-stroke:0.3px #0a0a0a;letter-spacing:0.295px;"><span class="t">Agregar</span></div>
<div class="tx" style="left:1540.5px;top:523.03px;font-size:14.49px;font-weight:400;color:#6b7280;letter-spacing:0.143px;"><span class="t">Asignar ahora</span></div>
<div style="left:1792px;top:514px;width:32px;height:32px;background:#4f46e5;border-radius:6px"></div>
<svg style="left:1800.0px;top:522.0px;" width="16" height="16" viewBox="0 0 24 24" fill="none" stroke="#ffffff" stroke-width="2" stroke-linecap="round" stroke-linejoin="round"><path d="M6 3l14 9-14 9z"/></svg>
<svg style="left:151.4px;top:574.8px" width="22" height="16" viewBox="0 0 22 16" fill="none" stroke="#0050c3" stroke-width="1.6" stroke-linecap="round"><path d="M9.3 12A4.6 4.6 0 1 1 11.6 7.76"/><path d="M7.4 8.25Q7.5 10.3 9.03 11.7A6.2 6.2 0 1 0 9.5 3.6"/></svg>
<div class="tx" style="left:-137px;width:600px;text-align:center;top:598.69px;font-size:12.42px;font-weight:400;color:#374151;letter-spacing:0.06px;"><span class="t">Alaika</span></div>
<div class="tx" style="left:222px;top:586.03px;font-size:14.49px;font-weight:700;color:#2563eb;letter-spacing:0.306px;"><span class="t">#TN-3165</span></div>
<div class="tx" style="left:329px;top:586.03px;font-size:14.49px;font-weight:400;color:#0a0a0a;letter-spacing:0.079px;"><span class="t">Retiro en tienda</span></div>
<div class="tx" style="left:239.79999999999995px;width:600px;text-align:center;top:577.53px;font-size:14.49px;font-weight:400;color:#0a0a0a;-webkit-text-stroke:0.3px #0a0a0a;letter-spacing:0.352px;"><span class="t">03 ene</span></div>
<div class="tx" style="left:239.79999999999995px;width:600px;text-align:center;top:597.19px;font-size:12.42px;font-weight:400;color:#6b7280;letter-spacing:0.662px;font-variant-numeric:tabular-nums;"><span class="t">18:25</span></div>
<div class="tx" style="left:617.7px;top:586.03px;font-size:14.49px;font-weight:400;color:#0a0a0a;letter-spacing:0.155px;"><span class="t">Sabrina fianini</span></div>
<div class="fx" style="left:716.6px;top:583px;width:400px;height:20px"><span class="t" style="font-size:14.49px;line-height:20px;color:#0a0a0a;font-variant-numeric:tabular-nums;letter-spacing:0.232px;">7 unid.</span><svg width="16" height="16" viewBox="0 0 24 24" fill="none" stroke="#d4913b" stroke-width="2" stroke-linecap="round" stroke-linejoin="round" style="margin-left:3.4px"><path d="m21.73 18-8-14a2 2 0 0 0-3.48 0l-8 14A2 2 0 0 0 4 21h16a2 2 0 0 0 1.73-3"/><path d="M12 9v4"/><path d="M12 17h.01"/></svg></div>
<svg style="left:997.0px;top:585.3px;" width="16" height="16" viewBox="0 0 24 24" fill="none" stroke="#d4913b" stroke-width="2" stroke-linecap="round" stroke-linejoin="round"><circle cx="12" cy="12" r="10"/><path d="M12 6v6l4 2"/></svg>
<div style="left:1065px;top:570px;width:143px;height:26px;background:#e2e8f0;border:1px solid #cfd8e3;border-radius:13px"></div>
<svg style="left:1078.0px;top:575.0px;" width="16" height="16" viewBox="0 0 24 24" fill="none" stroke="#4f5d72" stroke-width="2" stroke-linecap="round" stroke-linejoin="round"><path d="M14 18V6a2 2 0 0 0-2-2H4a2 2 0 0 0-2 2v11a1 1 0 0 0 1 1h2"/><path d="M15 18H9"/><path d="M19 18h2a1 1 0 0 0 1-1v-3.65a1 1 0 0 0-.22-.624l-3.48-4.35A1 1 0 0 0 17.52 8H14"/><circle cx="17" cy="18" r="2"/><circle cx="7" cy="18" r="2"/></svg>
<div class="tx" style="left:1102px;top:576.79px;font-size:12.42px;font-weight:700;color:#475569;letter-spacing:-0.102px;"><span class="t">Por empaquetar</span></div>
<div class="tx" style="left:834px;width:600px;text-align:center;top:601.79px;font-size:12.42px;font-weight:400;color:#4b5563;letter-spacing:-0.396px;"><span class="t">RETIRO EN OFI...</span></div>
<div style="left:1259px;top:582px;width:80px;height:22px;background:#e2e8f0;border-radius:11px"></div>
<div class="tx" style="left:999.2px;width:600px;text-align:center;top:587.29px;font-size:12.42px;font-weight:700;color:#475569;letter-spacing:-0.102px;"><span class="t">Pendiente</span></div>
<div style="left:1397px;top:579px;width:100px;height:28px;background:#fff;border:1px solid #e5e7eb;border-radius:6px"></div>
<svg style="left:1410.0px;top:585.0px;" width="16" height="16" viewBox="0 0 24 24" fill="none" stroke="#0a0a0a" stroke-width="2" stroke-linecap="round" stroke-linejoin="round"><circle cx="12" cy="12" r="10"/><path d="M12 6v6l4 2"/></svg>
<div class="tx" style="left:1438.5px;top:587.29px;font-size:12.42px;font-weight:400;color:#0a0a0a;-webkit-text-stroke:0.3px #0a0a0a;letter-spacing:0.295px;"><span class="t">Agregar</span></div>
<div class="tx" style="left:1540.5px;top:586.03px;font-size:14.49px;font-weight:400;color:#6b7280;letter-spacing:0.143px;"><span class="t">Asignar ahora</span></div>
<div style="left:1792px;top:577px;width:32px;height:32px;background:#4f46e5;border-radius:6px"></div>
<svg style="left:1800.0px;top:585.0px;" width="16" height="16" viewBox="0 0 24 24" fill="none" stroke="#ffffff" stroke-width="2" stroke-linecap="round" stroke-linejoin="round"><path d="M6 3l14 9-14 9z"/></svg>
<svg style="left:151.4px;top:637.8px" width="22" height="16" viewBox="0 0 22 16" fill="none" stroke="#0050c3" stroke-width="1.6" stroke-linecap="round"><path d="M9.3 12A4.6 4.6 0 1 1 11.6 7.76"/><path d="M7.4 8.25Q7.5 10.3 9.03 11.7A6.2 6.2 0 1 0 9.5 3.6"/></svg>
<div class="tx" style="left:-137px;width:600px;text-align:center;top:661.69px;font-size:12.42px;font-weight:400;color:#374151;letter-spacing:0.06px;"><span class="t">Alaika</span></div>
<div class="tx" style="left:222px;top:649.03px;font-size:14.49px;font-weight:700;color:#2563eb;letter-spacing:0.37px;"><span class="t">#TN-3164</span></div>
<div class="tx" style="left:329px;top:649.03px;font-size:14.49px;font-weight:400;color:#0a0a0a;letter-spacing:0.079px;"><span class="t">Retiro en tienda</span></div>
<div class="tx" style="left:239.79999999999995px;width:600px;text-align:center;top:640.53px;font-size:14.49px;font-weight:400;color:#0a0a0a;-webkit-text-stroke:0.3px #0a0a0a;letter-spacing:0.326px;"><span class="t">02 ene</span></div>
<div class="tx" style="left:239.79999999999995px;width:600px;text-align:center;top:660.19px;font-size:12.42px;font-weight:400;color:#6b7280;letter-spacing:0.662px;font-variant-numeric:tabular-nums;"><span class="t">19:09</span></div>
<div class="tx" style="left:617.7px;top:649.03px;font-size:14.49px;font-weight:400;color:#0a0a0a;letter-spacing:0.156px;"><span class="t">Adriana damato</span></div>
<div class="fx" style="left:716.6px;top:646px;width:400px;height:20px"><span class="t" style="font-size:14.49px;line-height:20px;color:#0a0a0a;font-variant-numeric:tabular-nums;letter-spacing:0.332px;">18 unid.</span><svg width="16" height="16" viewBox="0 0 24 24" fill="none" stroke="#d4913b" stroke-width="2" stroke-linecap="round" stroke-linejoin="round" style="margin-left:3.4px"><path d="m21.73 18-8-14a2 2 0 0 0-3.48 0l-8 14A2 2 0 0 0 4 21h16a2 2 0 0 0 1.73-3"/><path d="M12 9v4"/><path d="M12 17h.01"/></svg></div>
<svg style="left:997.0px;top:648.3px;" width="16" height="16" viewBox="0 0 24 24" fill="none" stroke="#d4913b" stroke-width="2" stroke-linecap="round" stroke-linejoin="round"><circle cx="12" cy="12" r="10"/><path d="M12 6v6l4 2"/></svg>
<div style="left:1065px;top:633px;width:143px;height:26px;background:#e2e8f0;border:1px solid #cfd8e3;border-radius:13px"></div>
<svg style="left:1078.0px;top:638.0px;" width="16" height="16" viewBox="0 0 24 24" fill="none" stroke="#4f5d72" stroke-width="2" stroke-linecap="round" stroke-linejoin="round"><path d="M14 18V6a2 2 0 0 0-2-2H4a2 2 0 0 0-2 2v11a1 1 0 0 0 1 1h2"/><path d="M15 18H9"/><path d="M19 18h2a1 1 0 0 0 1-1v-3.65a1 1 0 0 0-.22-.624l-3.48-4.35A1 1 0 0 0 17.52 8H14"/><circle cx="17" cy="18" r="2"/><circle cx="7" cy="18" r="2"/></svg>
<div class="tx" style="left:1102px;top:639.79px;font-size:12.42px;font-weight:700;color:#475569;letter-spacing:-0.102px;"><span class="t">Por empaquetar</span></div>
<div class="tx" style="left:834px;width:600px;text-align:center;top:664.79px;font-size:12.42px;font-weight:400;color:#4b5563;letter-spacing:-0.396px;"><span class="t">RETIRO EN OFI...</span></div>
<div style="left:1259px;top:645px;width:80px;height:22px;background:#e2e8f0;border-radius:11px"></div>
<div class="tx" style="left:999.2px;width:600px;text-align:center;top:650.29px;font-size:12.42px;font-weight:700;color:#475569;letter-spacing:-0.102px;"><span class="t">Pendiente</span></div>
<div style="left:1397px;top:642px;width:100px;height:28px;background:#fff;border:1px solid #e5e7eb;border-radius:6px"></div>
<svg style="left:1410.0px;top:648.0px;" width="16" height="16" viewBox="0 0 24 24" fill="none" stroke="#0a0a0a" stroke-width="2" stroke-linecap="round" stroke-linejoin="round"><circle cx="12" cy="12" r="10"/><path d="M12 6v6l4 2"/></svg>
<div class="tx" style="left:1438.5px;top:650.29px;font-size:12.42px;font-weight:400;color:#0a0a0a;-webkit-text-stroke:0.3px #0a0a0a;letter-spacing:0.295px;"><span class="t">Agregar</span></div>
<div class="tx" style="left:1540.5px;top:649.03px;font-size:14.49px;font-weight:400;color:#6b7280;letter-spacing:0.143px;"><span class="t">Asignar ahora</span></div>
<div style="left:1792px;top:640px;width:32px;height:32px;background:#4f46e5;border-radius:6px"></div>
<svg style="left:1800.0px;top:648.0px;" width="16" height="16" viewBox="0 0 24 24" fill="none" stroke="#ffffff" stroke-width="2" stroke-linecap="round" stroke-linejoin="round"><path d="M6 3l14 9-14 9z"/></svg>
<svg style="left:151.4px;top:700.8px" width="22" height="16" viewBox="0 0 22 16" fill="none" stroke="#0050c3" stroke-width="1.6" stroke-linecap="round"><path d="M9.3 12A4.6 4.6 0 1 1 11.6 7.76"/><path d="M7.4 8.25Q7.5 10.3 9.03 11.7A6.2 6.2 0 1 0 9.5 3.6"/></svg>
<div class="tx" style="left:-137px;width:600px;text-align:center;top:724.69px;font-size:12.42px;font-weight:400;color:#374151;letter-spacing:0.168px;"><span class="t">Perfumia</span></div>
<div class="tx" style="left:222px;top:712.03px;font-size:14.49px;font-weight:700;color:#2563eb;letter-spacing:0.606px;"><span class="t">#TN-4576</span></div>
<div class="tx" style="left:329px;top:712.03px;font-size:14.49px;font-weight:400;color:#0a0a0a;letter-spacing:0.209px;"><span class="t">Despacho</span></div>
<div class="tx" style="left:239.79999999999995px;width:600px;text-align:center;top:703.53px;font-size:14.49px;font-weight:400;color:#0a0a0a;-webkit-text-stroke:0.3px #0a0a0a;letter-spacing:0.326px;"><span class="t">02 ene</span></div>
<div class="tx" style="left:239.79999999999995px;width:600px;text-align:center;top:723.19px;font-size:12.42px;font-weight:400;color:#6b7280;letter-spacing:0.662px;font-variant-numeric:tabular-nums;"><span class="t">16:56</span></div>
<div class="tx" style="left:617.7px;top:712.03px;font-size:14.49px;font-weight:400;color:#0a0a0a;letter-spacing:0.065px;"><span class="t">Melanie Gamarra</span></div>
<div class="fx" style="left:716.6px;top:709px;width:400px;height:20px"><span class="t" style="font-size:14.49px;line-height:20px;color:#0a0a0a;font-variant-numeric:tabular-nums;letter-spacing:0.232px;">1 unid.</span><svg width="16" height="16" viewBox="0 0 24 24" fill="none" stroke="#d4913b" stroke-width="2" stroke-linecap="round" stroke-linejoin="round" style="margin-left:3.4px"><path d="m21.73 18-8-14a2 2 0 0 0-3.48 0l-8 14A2 2 0 0 0 4 21h16a2 2 0 0 0 1.73-3"/><path d="M12 9v4"/><path d="M12 17h.01"/></svg></div>
<svg style="left:997.0px;top:711.3px;" width="16" height="16" viewBox="0 0 24 24" fill="none" stroke="#16a34a" stroke-width="2" stroke-linecap="round" stroke-linejoin="round"><path d="M12 2v20"/><path d="M17 5H9.5a3.5 3.5 0 0 0 0 7h5a3.5 3.5 0 0 1 0 7H6"/></svg>
<div style="left:1065px;top:696px;width:143px;height:26px;background:#e2e8f0;border:1px solid #cfd8e3;border-radius:13px"></div>
<svg style="left:1078.0px;top:701.0px;" width="16" height="16" viewBox="0 0 24 24" fill="none" stroke="#4f5d72" stroke-width="2" stroke-linecap="round" stroke-linejoin="round"><path d="M14 18V6a2 2 0 0 0-2-2H4a2 2 0 0 0-2 2v11a1 1 0 0 0 1 1h2"/><path d="M15 18H9"/><path d="M19 18h2a1 1 0 0 0 1-1v-3.65a1 1 0 0 0-.22-.624l-3.48-4.35A1 1 0 0 0 17.52 8H14"/><circle cx="17" cy="18" r="2"/><circle cx="7" cy="18" r="2"/></svg>
<div class="tx" style="left:1102px;top:702.79px;font-size:12.42px;font-weight:700;color:#475569;letter-spacing:-0.102px;"><span class="t">Por empaquetar</span></div>
<div class="tx" style="left:833px;width:600px;text-align:center;top:727.79px;font-size:12.42px;font-weight:400;color:#4b5563;letter-spacing:0.203px;"><span class="t">Correo Argenti...</span></div>
<div style="left:1259px;top:708px;width:80px;height:22px;background:#e2e8f0;border-radius:11px"></div>
<div class="tx" style="left:999.2px;width:600px;text-align:center;top:713.29px;font-size:12.42px;font-weight:700;color:#475569;letter-spacing:-0.102px;"><span class="t">Pendiente</span></div>
<div style="left:1397px;top:705px;width:100px;height:28px;background:#fff;border:1px solid #e5e7eb;border-radius:6px"></div>
<svg style="left:1410.0px;top:711.0px;" width="16" height="16" viewBox="0 0 24 24" fill="none" stroke="#0a0a0a" stroke-width="2" stroke-linecap="round" stroke-linejoin="round"><circle cx="12" cy="12" r="10"/><path d="M12 6v6l4 2"/></svg>
<div class="tx" style="left:1438.5px;top:713.29px;font-size:12.42px;font-weight:400;color:#0a0a0a;-webkit-text-stroke:0.3px #0a0a0a;letter-spacing:0.295px;"><span class="t">Agregar</span></div>
<div class="tx" style="left:1540.5px;top:712.03px;font-size:14.49px;font-weight:400;color:#6b7280;letter-spacing:0.143px;"><span class="t">Asignar ahora</span></div>
<div style="left:1792px;top:703px;width:32px;height:32px;background:#4f46e5;border-radius:6px"></div>
<svg style="left:1800.0px;top:711.0px;" width="16" height="16" viewBox="0 0 24 24" fill="none" stroke="#ffffff" stroke-width="2" stroke-linecap="round" stroke-linejoin="round"><path d="M6 3l14 9-14 9z"/></svg>
<svg style="left:151.4px;top:763.8px" width="22" height="16" viewBox="0 0 22 16" fill="none" stroke="#0050c3" stroke-width="1.6" stroke-linecap="round"><path d="M9.3 12A4.6 4.6 0 1 1 11.6 7.76"/><path d="M7.4 8.25Q7.5 10.3 9.03 11.7A6.2 6.2 0 1 0 9.5 3.6"/></svg>
<div class="tx" style="left:-137px;width:600px;text-align:center;top:787.69px;font-size:12.42px;font-weight:400;color:#374151;letter-spacing:0.168px;"><span class="t">Perfumia</span></div>
<div class="tx" style="left:222px;top:775.03px;font-size:14.49px;font-weight:700;color:#2563eb;letter-spacing:0.599px;"><span class="t">#TN-4575</span></div>
<div class="tx" style="left:329px;top:775.03px;font-size:14.49px;font-weight:400;color:#0a0a0a;letter-spacing:0.079px;"><span class="t">Retiro en tienda</span></div>
<div class="tx" style="left:239.79999999999995px;width:600px;text-align:center;top:766.53px;font-size:14.49px;font-weight:400;color:#0a0a0a;-webkit-text-stroke:0.3px #0a0a0a;letter-spacing:0.326px;"><span class="t">02 ene</span></div>
<div class="tx" style="left:239.79999999999995px;width:600px;text-align:center;top:786.19px;font-size:12.42px;font-weight:400;color:#6b7280;letter-spacing:0.662px;font-variant-numeric:tabular-nums;"><span class="t">15:32</span></div>
<div class="tx" style="left:617.7px;top:775.03px;font-size:14.49px;font-weight:400;color:#0a0a0a;letter-spacing:0.195px;"><span class="t">Diego Akaui</span></div>
<div class="fx" style="left:716.6px;top:772px;width:400px;height:20px"><span class="t" style="font-size:14.49px;line-height:20px;color:#0a0a0a;font-variant-numeric:tabular-nums;letter-spacing:0.232px;">1 unid.</span><svg width="16" height="16" viewBox="0 0 24 24" fill="none" stroke="#d4913b" stroke-width="2" stroke-linecap="round" stroke-linejoin="round" style="margin-left:3.4px"><path d="m21.73 18-8-14a2 2 0 0 0-3.48 0l-8 14A2 2 0 0 0 4 21h16a2 2 0 0 0 1.73-3"/><path d="M12 9v4"/><path d="M12 17h.01"/></svg></div>
<svg style="left:997.0px;top:774.3px;" width="16" height="16" viewBox="0 0 24 24" fill="none" stroke="#d4913b" stroke-width="2" stroke-linecap="round" stroke-linejoin="round"><circle cx="12" cy="12" r="10"/><path d="M12 6v6l4 2"/></svg>
<div style="left:1082px;top:759px;width:109px;height:26px;background:#dcfce7;border:1px solid #86efac;border-radius:13px"></div>
<svg style="left:1095.0px;top:764.0px;" width="16" height="16" viewBox="0 0 24 24" fill="none" stroke="#15803d" stroke-width="2" stroke-linecap="round" stroke-linejoin="round"><path d="M14 18V6a2 2 0 0 0-2-2H4a2 2 0 0 0-2 2v11a1 1 0 0 0 1 1h2"/><path d="M15 18H9"/><path d="M19 18h2a1 1 0 0 0 1-1v-3.65a1 1 0 0 0-.22-.624l-3.48-4.35A1 1 0 0 0 17.52 8H14"/><circle cx="17" cy="18" r="2"/><circle cx="7" cy="18" r="2"/></svg>
<div class="tx" style="left:1119px;top:765.79px;font-size:12.42px;font-weight:700;color:#15803d;letter-spacing:-0.161px;"><span class="t">Entregada</span></div>
<div class="tx" style="left:835.3px;width:600px;text-align:center;top:790.79px;font-size:12.42px;font-weight:400;color:#4b5563;letter-spacing:-0.157px;"><span class="t">IMPORTANTE!!!...</span></div>
<div style="left:1258px;top:771px;width:82px;height:22px;background:#dcfce7;border-radius:11px"></div>
<div class="tx" style="left:999.2px;width:600px;text-align:center;top:776.29px;font-size:12.42px;font-weight:700;color:#15803d;letter-spacing:-0.191px;"><span class="t">Entregado</span></div>
<div style="left:1411px;top:760px;width:72px;height:22px;background:#fee2e2;border:1px solid #fca5a5;border-radius:11px"></div>
<svg style="left:1422.0px;top:765.0px;" width="12" height="12" viewBox="0 0 24 24" fill="none" stroke="#b91c1c" stroke-width="2" stroke-linecap="round" stroke-linejoin="round"><circle cx="12" cy="12" r="10"/><path d="M12 6v6l4 2"/></svg>
<div class="tx" style="left:1438.5px;top:764.79px;font-size:12.42px;font-weight:700;color:#991b1b;letter-spacing:0.506px;font-variant-numeric:tabular-nums;"><span class="t">17:00</span></div>
<div class="tx" style="left:1147px;width:600px;text-align:center;top:789.54px;font-size:10.35px;font-weight:400;color:#6b7280;letter-spacing:0.731px;font-variant-numeric:tabular-nums;"><span class="t">02/01/2026</span></div>
<div class="tx" style="left:1338.6px;width:600px;text-align:center;top:775.03px;font-size:14.49px;font-weight:400;color:#0a0a0a;letter-spacing:0.162px;"><span class="t">En proceso de logística</span></div>
<div class="tx" style="left:129px;top:836.73px;font-size:14.49px;font-weight:400;color:#475569;letter-spacing:0.194px;font-variant-numeric:tabular-nums;"><span class="t">Página 1 de 59</span></div>
<div style="left:1485px;top:826px;width:80px;height:36px;background:#fff;border:1px solid #eef0f3;border-radius:7px"></div>
<div class="tx" style="left:1225.3px;width:600px;text-align:center;top:836.53px;font-size:14.49px;font-weight:400;color:#9b9b9b;-webkit-text-stroke:0.3px #9b9b9b;letter-spacing:0.436px;"><span class="t">Anterior</span></div>
<div style="left:1573px;top:826px;width:30px;height:36px;background:#4f46e5;border-radius:7px"></div>
<div class="tx" style="left:1288px;width:600px;text-align:center;top:836.53px;font-size:14.49px;font-weight:400;color:#ffffff;-webkit-text-stroke:0.12px #ffffff;letter-spacing:0px;"><span class="t">1</span></div>
<div style="left:1607px;top:826px;width:35px;height:36px;background:#fff;border:1px solid #e5e7eb;border-radius:7px"></div>
<div class="tx" style="left:1324.5px;width:600px;text-align:center;top:836.53px;font-size:14.49px;font-weight:400;color:#0a0a0a;-webkit-text-stroke:0.3px #0a0a0a;letter-spacing:0px;"><span class="t">2</span></div>
<div style="left:1646px;top:826px;width:35px;height:36px;background:#fff;border:1px solid #e5e7eb;border-radius:7px"></div>
<div class="tx" style="left:1363.5px;width:600px;text-align:center;top:836.53px;font-size:14.49px;font-weight:400;color:#0a0a0a;-webkit-text-stroke:0.3px #0a0a0a;letter-spacing:0px;"><span class="t">3</span></div>
<div style="left:1685px;top:826px;width:35px;height:36px;background:#fff;border:1px solid #e5e7eb;border-radius:7px"></div>
<div class="tx" style="left:1402.5px;width:600px;text-align:center;top:836.53px;font-size:14.49px;font-weight:400;color:#0a0a0a;-webkit-text-stroke:0.3px #0a0a0a;letter-spacing:0px;"><span class="t">4</span></div>
<div style="left:1724px;top:826px;width:34px;height:36px;background:#fff;border:1px solid #e5e7eb;border-radius:7px"></div>
<div class="tx" style="left:1441.0px;width:600px;text-align:center;top:836.53px;font-size:14.49px;font-weight:400;color:#0a0a0a;-webkit-text-stroke:0.3px #0a0a0a;letter-spacing:0px;"><span class="t">5</span></div>
<div style="left:1766px;top:826px;width:89px;height:36px;background:#fff;border:1px solid #e5e7eb;border-radius:7px"></div>
<div class="tx" style="left:1510.5px;width:600px;text-align:center;top:836.53px;font-size:14.49px;font-weight:400;color:#0a0a0a;-webkit-text-stroke:0.3px #0a0a0a;letter-spacing:0.255px;"><span class="t">Siguiente</span></div>
</div></div>
</body></html>
